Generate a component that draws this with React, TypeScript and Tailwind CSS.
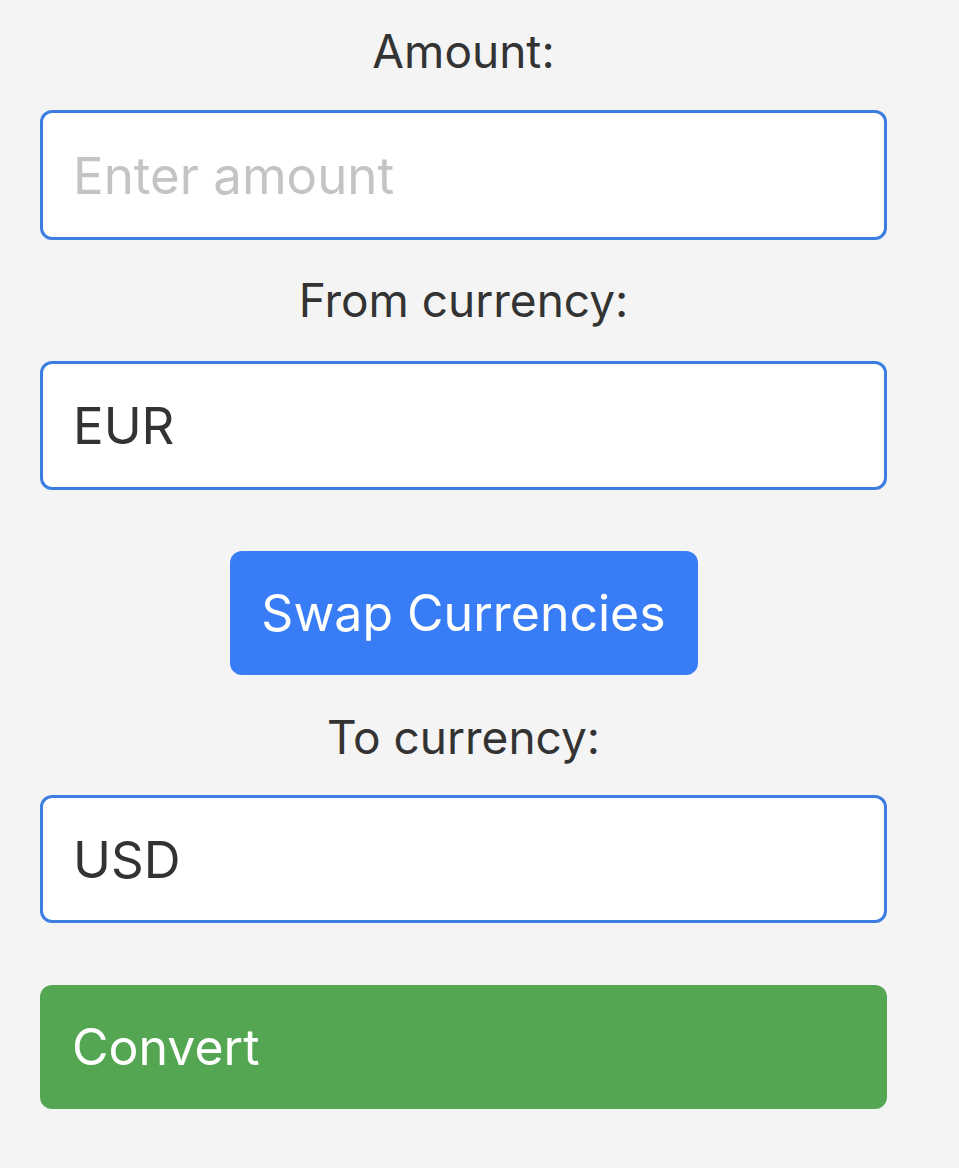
import React from "react";

export default function App() {
  const font = { fontFamily: 'Inter, "Noto Sans", sans-serif' };
  return (
    <div className="min-h-[1168px] w-[959px] bg-[#f4f4f4] text-[#333333]" style={font}>
      <div className="ml-[40px] w-[847px] flex flex-col pt-[22px]">
        <label className="block text-center text-[46px] leading-[58px]">Amount:</label>
        <input
          className="mt-[30px] h-[130px] w-full rounded-[12px] border-[3px] border-[#3b7de0] bg-white pl-[30px] text-[51px] text-[#333333] outline-none placeholder:text-[#c4c4c4]"
          placeholder="Enter amount"
        />
        <label className="mt-[31px] block text-center text-[46px] leading-[58px]">From currency:</label>
        <input
          className="mt-[32px] h-[129px] w-full rounded-[12px] border-[3px] border-[#3b7de0] bg-white pl-[30px] text-[51px] text-[#333333] outline-none"
          defaultValue="EUR"
        />
        <div className="mt-[61px] flex justify-center">
          <button className="h-[124px] w-[468px] rounded-[12px] bg-[#387cf6] text-[50px] text-white">
            Swap Currencies
          </button>
        </div>
        <label className="mt-[33px] block text-center text-[46px] leading-[58px]">To currency:</label>
        <input
          className="mt-[29px] h-[128px] w-full rounded-[12px] border-[3px] border-[#3b7de0] bg-white pl-[30px] text-[51px] text-[#333333] outline-none"
          defaultValue="USD"
        />
        <button className="mt-[62px] h-[124px] w-full rounded-[12px] bg-[#55a653] pl-[32px] text-left text-[50px] text-white">
          Convert
        </button>
      </div>
    </div>
  );
}
